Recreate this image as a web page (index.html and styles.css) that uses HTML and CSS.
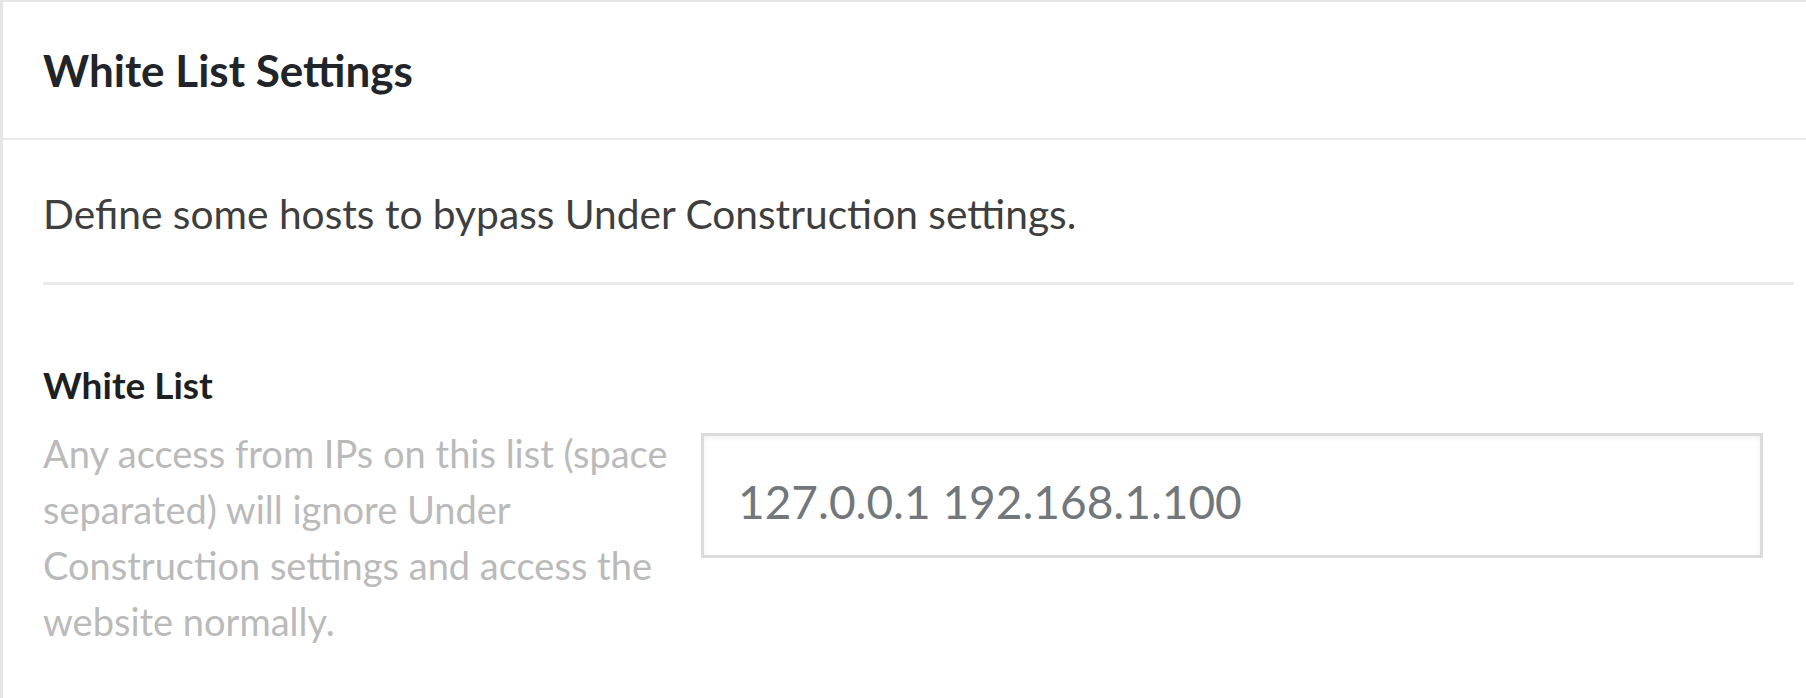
FILE: index.html
```html
<!DOCTYPE html>
<html lang="en">
  <head>
    <meta charset="UTF-8" />
    <meta name="viewport" content="width=device-width, initial-scale=1.0" />
    <title>White List Settings</title>
    <link rel="stylesheet" href="styles.css">
  </head>
  <body>
    <!-- =========== white list card ========= -->
    <div class="card">
      <div class="card-header">
        <h5>White List Settings</h5>
      </div>
      <div class="card-body">
        <p class="intro">Define some hosts to bypass Under Construction settings.</p>
        <hr />

        <div class="form-row">
          <div class="form-label">
            <label for="whiteList">White List</label>
            <small>Any access from IPs on this list (space separated) will ignore Under Construction settings and access the website normally.</small>
          </div>
          <div class="form-field">
            <input type="text" id="whiteList" value="127.0.0.1 192.168.1.100" />
          </div>
        </div>
      </div>
    </div>
  </body>
</html>
```

FILE: styles.css
```css
* {
  margin: 0;
  padding: 0;
  box-sizing: border-box;
}

html,
body {
  overflow: hidden;
}

body {
  background-color: #fff;
  font-family: Lato, "Open Sans", "Noto Sans", sans-serif;
}

.card {
  width: 1834px;
  min-height: 100vh;
  background: #fff;
  border-top: 2px solid #e6e6e6;
  border-left: 3px solid #e6e6e6;
}

.card-header {
  height: 138px;
  padding: 0 40px;
  display: flex;
  align-items: center;
  border-bottom: 2px solid #e8e8e8;
}

.card-header h5 {
  font-size: 44px;
  font-weight: 700;
  color: #212529;
}

.card-body {
  padding: 42px 40px 0;
}

.intro {
  font-size: 40.7px;
  line-height: 63px;
  color: #3e3e3e;
}

hr {
  border: none;
  border-top: 3px solid #ebebeb;
  margin-top: 37px;
}

.form-row {
  display: grid;
  grid-template-columns: 645px 1062px;
  column-gap: 13px;
  align-items: start;
  margin-top: 74px;
}

label {
  display: block;
  font-size: 37px;
  font-weight: 700;
  line-height: 51px;
  color: #1d1f21;
}

small {
  display: block;
  margin-top: 15px;
  font-size: 38px;
  line-height: 56px;
  color: #bababa;
}

.form-field {
  padding-top: 74px;
}

input[type="text"] {
  width: 100%;
  height: 125px;
  padding: 12px 34px 0;
  font-family: Lato, "Open Sans", sans-serif;
  font-size: 46px;
  color: #72777b;
  background: #fff;
  border: 3px solid #dcdcdc;
  box-shadow: inset 0 2px 6px rgba(0, 0, 0, 0.06);
  outline: none;
}
```
